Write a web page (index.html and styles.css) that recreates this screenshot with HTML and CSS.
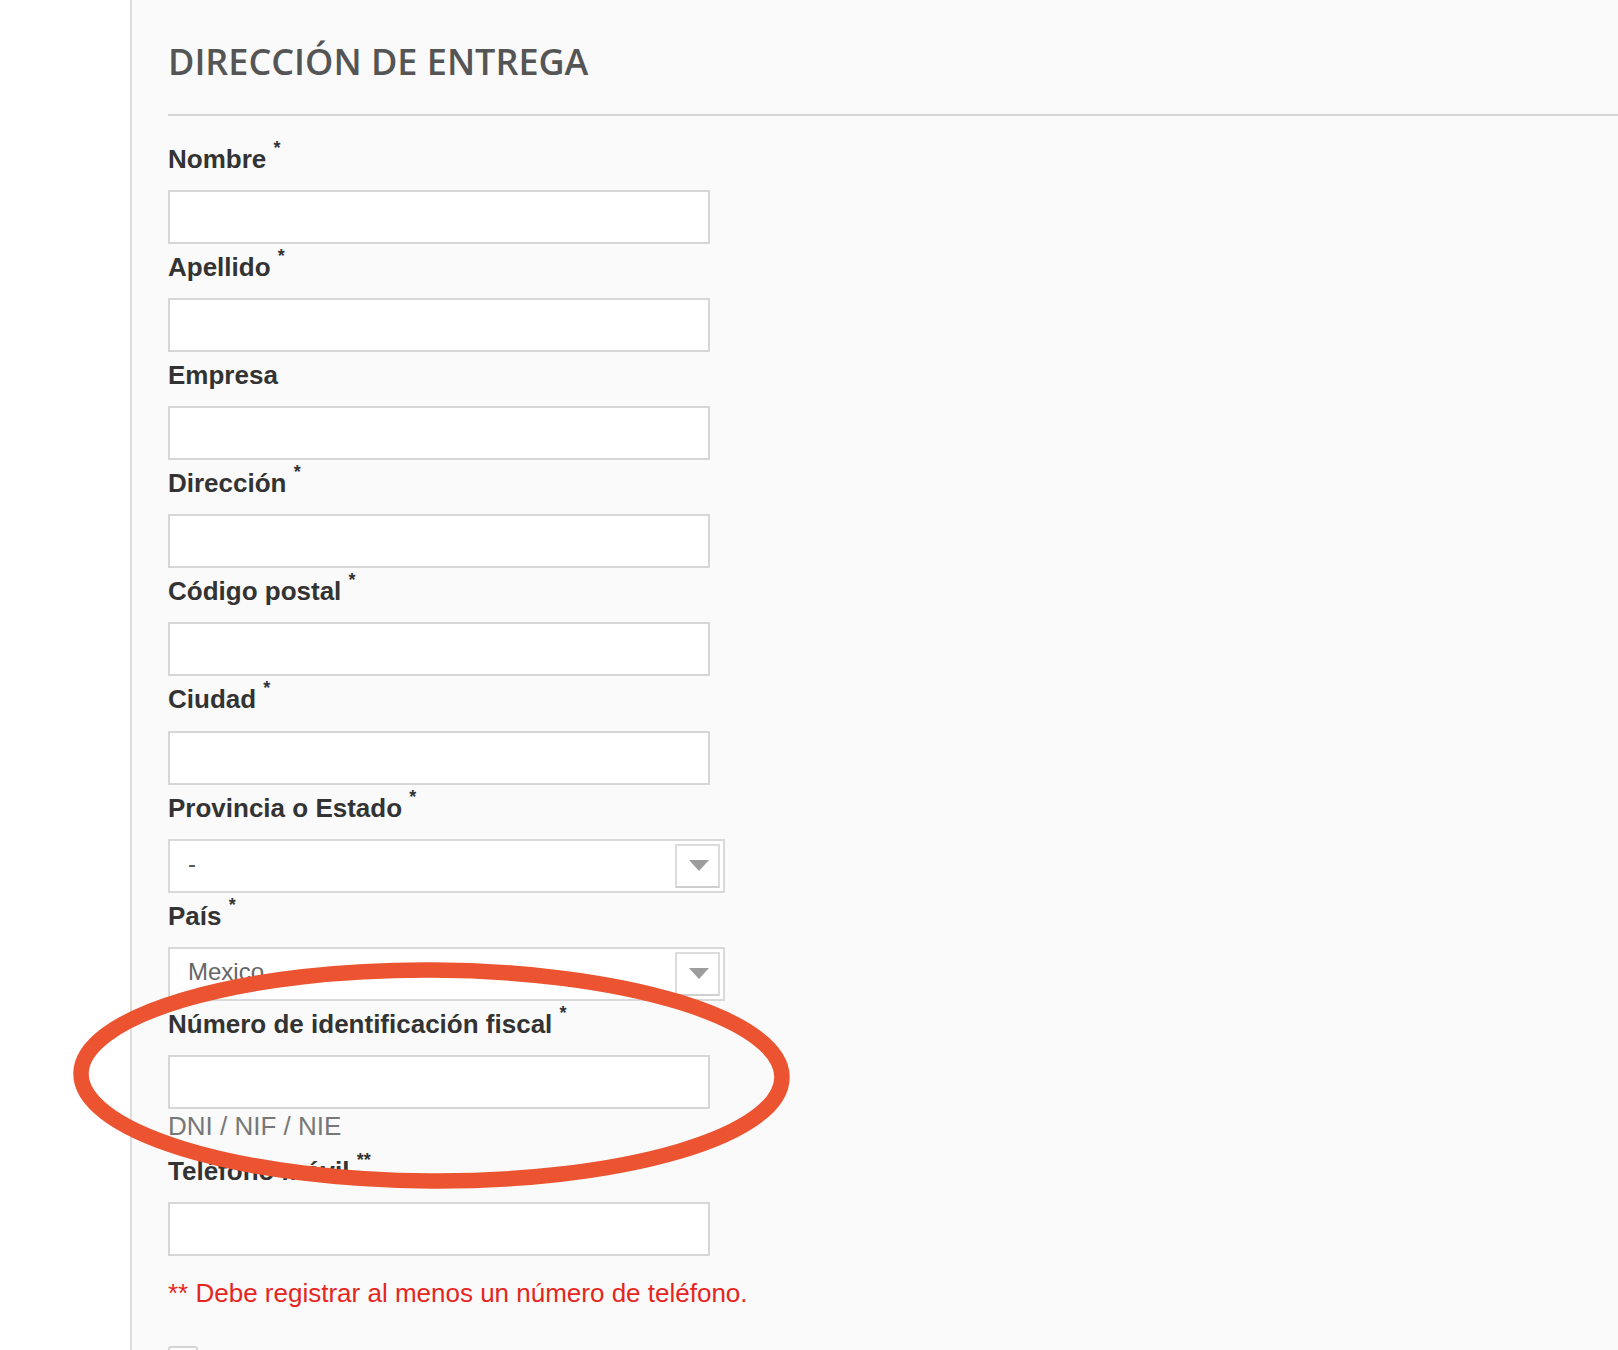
FILE: index.html
```html
<!DOCTYPE html>
<html lang="es">
<head>
<meta charset="utf-8">
<title>Dirección de entrega</title>
<link rel="stylesheet" href="styles.css">
</head>
<body>
<div class="page">
  <aside class="sidebar"></aside>
  <main class="content">
    <h1 class="title">DIRECCIÓN DE ENTREGA</h1>
    <hr class="rule">
    <form class="form">
      <div class="field">
        <label class="label">Nombre <sup>*</sup></label>
        <input class="input" type="text">
      </div>
      <div class="field">
        <label class="label">Apellido <sup>*</sup></label>
        <input class="input" type="text">
      </div>
      <div class="field">
        <label class="label">Empresa</label>
        <input class="input" type="text">
      </div>
      <div class="field">
        <label class="label">Dirección <sup>*</sup></label>
        <input class="input" type="text">
      </div>
      <div class="field">
        <label class="label">Código postal <sup>*</sup></label>
        <input class="input" type="text">
      </div>
      <div class="field">
        <label class="label">Ciudad <sup>*</sup></label>
        <input class="input" type="text">
      </div>
      <div class="field">
        <label class="label">Provincia o Estado <sup>*</sup></label>
        <div class="select">
          <span class="select-value dash">-</span>
          <span class="select-btn"><span class="caret"></span></span>
        </div>
      </div>
      <div class="field">
        <label class="label">País <sup>*</sup></label>
        <div class="select">
          <span class="select-value">Mexico</span>
          <span class="select-btn"><span class="caret"></span></span>
        </div>
      </div>
      <div class="field">
        <label class="label">Número de identificación fiscal <sup>*</sup></label>
        <input class="input" type="text">
        <p class="hint">DNI / NIF / NIE</p>
      </div>
      <div class="field">
        <label class="label">Teléfono móvil <sup>**</sup></label>
        <input class="input" type="text">
      </div>
      <p class="note">** Debe registrar al menos un número de teléfono.</p>
      <div class="checkbox"></div>
    </form>
  </main>
  <svg class="circle" width="760" height="270" viewBox="0 0 760 270" aria-hidden="true">
    <ellipse cx="371.5" cy="125.5" rx="350.5" ry="105.5" fill="none" stroke="#eb5331" stroke-width="15.5" transform="rotate(0.3 371.5 125.5)"/>
  </svg>
</div>
</body>
</html>
```
FILE: styles.css
```css
* { box-sizing: border-box; }

html, body {
  margin: 0;
  padding: 0;
  background: #ffffff;
}

.page {
  position: relative;
  display: flex;
  min-height: 1350px;
  overflow: hidden;
}

.sidebar {
  width: 132px;
  flex: 0 0 132px;
  background: #ffffff;
  border-right: 2px solid #dddddd;
}

.content {
  flex: 1;
  background: #fafafa;
  padding-left: 36px;
  min-height: 1350px;
}

.title {
  margin: 0;
  padding-top: 40px;
  font-family: "Open Sans", "DejaVu Sans", sans-serif;
  font-weight: 600;
  font-size: 36px;
  line-height: 44px;
  color: #555555;
}

.rule {
  margin: 30px 0 0 0;
  border: 0;
  height: 2px;
  background: #d6d6d6;
}

.form {
  padding-top: 20px;
  font-family: "Liberation Sans", Arial, sans-serif;
}

.field {
  display: flex;
  flex-direction: column;
  align-items: flex-start;
}

.label {
  display: block;
  padding-top: 8px;
  margin-bottom: 16.1px;
  font-size: 26px;
  line-height: 30px;
  font-weight: 700;
  color: #333333;
}

.label sup {
  font-size: 18px;
  line-height: 0;
  vertical-align: 14px;
}

.input {
  display: block;
  width: 542px;
  height: 54px;
  margin: 0;
  border: 2px solid #d6d6d6;
  background: #ffffff;
  border-radius: 0;
  outline: none;
}

.select {
  width: 557px;
  height: 54px;
  border: 2px solid #d9d9d9;
  background: #ffffff;
  display: flex;
  align-items: center;
  justify-content: space-between;
  padding-left: 18px;
  padding-right: 3px;
}

.select-value {
  font-size: 24px;
  color: #666666;
  margin-top: -3px;
}

.select-value.dash {
  color: #555555;
}

.select-btn {
  width: 45px;
  height: 44px;
  border: 2px solid #dcdcdc;
  border-bottom-color: #cfcfcf;
  background: #ffffff;
  display: flex;
  align-items: center;
  justify-content: center;
}

.caret {
  width: 0;
  height: 0;
  border-left: 10.5px solid transparent;
  border-right: 10.5px solid transparent;
  border-top: 11px solid #9d9d9d;
  margin-left: 3px;
}

.hint {
  margin: 2px 0 7px 0;
  font-size: 26px;
  line-height: 30px;
  color: #777777;
}

.note {
  margin: 22px 0 0 0;
  font-size: 26px;
  line-height: 30px;
  color: #e5261e;
}

.checkbox {
  margin-top: 38px;
  width: 30px;
  height: 30px;
  border: 2px solid #d4d4d4;
  border-radius: 3px;
  background: #ffffff;
}

.circle {
  position: absolute;
  left: 60px;
  top: 950px;
}
```
